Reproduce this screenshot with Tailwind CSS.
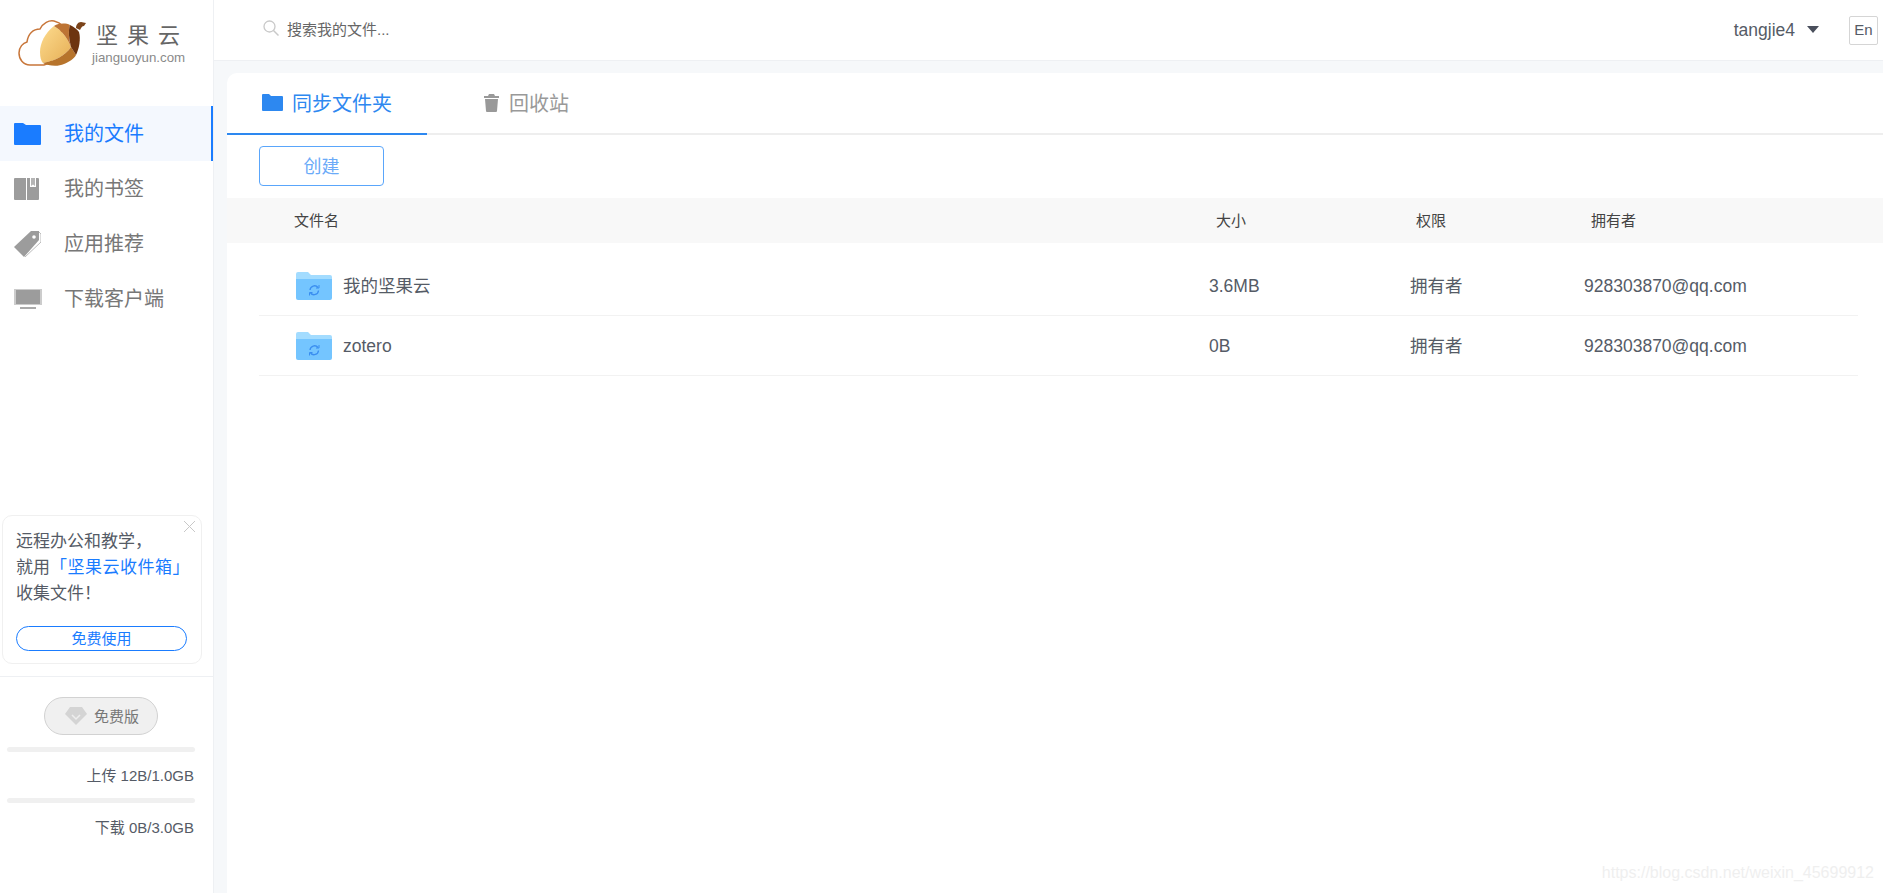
<!DOCTYPE html>
<html lang="zh-CN">
  <head>
    <meta charset="UTF-8">
    <title>坚果云</title>
    <script src="https://cdn.jsdelivr.net/npm/@tailwindcss/browser@4"></script>
  </head>
  <body class="font-['Liberation_Sans','Noto_Sans_CJK_SC',sans-serif] bg-white">
    <div class="relative flex h-[893px] w-[1883px] overflow-hidden">
      <!-- sidebar -->
      <aside class="flex h-full w-[214px] shrink-0 flex-col border-r border-[#eef0f3] bg-white">
        <div class="flex h-[106px] shrink-0 items-start pl-[18px] pt-[19px]">
          <svg class="shrink-0" width="70" height="48" viewBox="0 0 70 48">
            <defs>
              <linearGradient id="nut" x1="0" y1="0" x2="1" y2="1">
                <stop offset="0" stop-color="#fddc8f"/>
                <stop offset="1" stop-color="#e6ae55"/>
              </linearGradient>
            </defs>
            <path d="M26 46H12C5 46 1 40 1 34c0-6 4-10 8-11 1-8 6-13 13-13 3-6 9-9 14-8 4 1 7 3 9 5L32 44z" fill="#fff" stroke="#c8763a" stroke-width="1.500"/>
            <path d="M36 7C27 14 22 24 22 33c0 5 1 9 3 11C36 42 47 37 53 28 49 18 43 11 36 7z" fill="url(#nut)"/>
            <path d="M25 44c5 3 15 4 21 1 5-2 10-5 12-9l-5-8C47 37 36 42 25 44z" fill="#b7742c"/>
            <path d="M36 7c5-3 12-3 16-1-2 6-1 14 1 22C49 18 43 11 36 7z" fill="#bd7434"/>
            <path d="M52 6c4 2 7 4 9 7 2 7 0 17-3 23l-5-8c-2-8-3-16-1-22z" fill="#6d3410"/>
            <path d="M58 9c0-3 2-6 5-6l5 1-2 3c-2 0-3 2-4 4z" fill="#7b431a"/>
          </svg>
          <div class="ml-[4px] flex flex-col">
            <span class="pt-[5px] pl-[4px] text-[22px] leading-[24px] tracking-[9px] text-[#666] whitespace-nowrap">坚果云</span>
            <span class="mt-[2px] text-[13.300px] leading-[15px] text-[#8a8a8a]">jianguoyun.com</span>
          </div>
        </div>

        <nav class="flex flex-col">
          <a class="flex h-[55px] items-center border-r-2 border-[#1a7cff] bg-[#f4f8fe] pl-[14px] text-[20px] text-[#1a7cff]">
            <svg width="27" height="24" viewBox="0 0 27 24"><path d="M0 2a1 1 0 0 1 1-1h8l3 2h14a1 1 0 0 1 1 1v18a1 1 0 0 1-1 1H1a1 1 0 0 1-1-1z" fill="#1a7cff"/></svg>
            <span class="ml-[23px]">我的文件</span>
          </a>
          <a class="flex h-[55px] items-center pl-[14px] text-[20px] text-[#777]">
            <svg width="26" height="24" viewBox="0 0 26 24"><path d="M1 1h11v22H1a1 1 0 0 1-1-1V2a1 1 0 0 1 1-1zM13 1h3v9h6V1h2a1 1 0 0 1 1 1v20a1 1 0 0 1-1 1H13z" fill="#9c9c9c"/><path d="M17 1h4v8l-2-1.500L17 9z" fill="#b5b5b5"/></svg>
            <span class="ml-[24px]">我的书签</span>
          </a>
          <a class="flex h-[55px] items-center pl-[14px] text-[20px] text-[#777]">
            <svg width="27" height="27" viewBox="0 0 27 27"><path d="M17 1h8v9L10 27 0 17z" fill="#9c9c9c"/><path d="M25 2l2 2v8L11 27" fill="none" stroke="#bbb"/><circle cx="20" cy="7" r="1.800" fill="#fff"/></svg>
            <span class="ml-[23px]">应用推荐</span>
          </a>
          <a class="flex h-[55px] items-center pl-[14px] text-[20px] text-[#777]">
            <svg width="28" height="20" viewBox="0 0 28 20"><path d="M0 0h28v16H0z" fill="#ccc"/><path d="M2 1h24v14H2z" fill="#9c9c9c"/><path d="M6 18h16v2H6z" fill="#aaa"/></svg>
            <span class="ml-[22px]">下载客户端</span>
          </a>
        </nav>

        <div class="mt-auto">
          <div class="relative mx-[2px] h-[149px] w-[200px] rounded-[10px] border border-[#f0f0f0] px-[13px] pt-[13px] text-[17px] leading-[26px] text-[#555b66]">
            <svg class="absolute right-[5px] top-[4px]" width="13" height="13" viewBox="0 0 13 13"><path d="M1 1l11 11M12 1L1 12" stroke="#c8c8c8" stroke-width="1"/></svg>
            <p>远程办公和教学，</p>
            <p class="whitespace-nowrap">就用<span class="tracking-[0.500px] text-[#1a7cff]">「坚果云收件箱」</span></p>
            <p>收集文件！</p>
            <button class="mt-[19px] flex h-[25px] w-[171px] items-center justify-center rounded-full border border-[#1a7cff] text-[15px] text-[#1a7cff]">免费使用</button>
          </div>
          <div class="mt-[12px] h-[217px] border-t border-[#eef0f3]">
            <div class="ml-[44px] mt-[20px] flex h-[38px] w-[114px] items-center rounded-full border border-[#d2d2d2] bg-[#f0f0f0] pl-[20px] pt-[2px] text-[15px] text-[#777]">
              <svg class="-mt-[2px]" width="22" height="22" viewBox="0 0 22 22"><path d="M5 2h12l5 7-11 11L0 9z" fill="#d4d4d4"/><path d="M7 10l4 4 4-4" fill="none" stroke="#eee" stroke-width="1.500"/></svg>
              <span class="ml-[7px]">免费版</span>
            </div>
            <div class="ml-[7px] mr-[18px] mt-[12px] h-[5px] rounded-full bg-[#f0f0f0]"></div>
            <p class="mr-[19px] mt-[14px] text-right text-[15px] leading-[20px] text-[#555b66]">上传 12B/1.0GB</p>
            <div class="ml-[7px] mr-[18px] mt-[12px] h-[5px] rounded-full bg-[#f0f0f0]"></div>
            <p class="mr-[19px] mt-[15px] text-right text-[15px] leading-[20px] text-[#555b66]">下载 0B/3.0GB</p>
          </div>
        </div>
      </aside>

      <!-- main column -->
      <div class="flex min-w-0 flex-1 flex-col bg-[#f6f8fa]">
        <header class="flex h-[61px] shrink-0 items-center border-b border-[#eef0f3] bg-white">
          <svg class="ml-[49px] mb-[4px]" width="16" height="16" viewBox="0 0 16 16"><circle cx="6.500" cy="6.500" r="5.500" fill="none" stroke="#c9c9c9" stroke-width="1.300"/><path d="M10.500 10.500l5 5" stroke="#c9c9c9" stroke-width="1.500"/></svg>
          <span class="ml-[8px] pt-[1px] text-[15px] text-[#666]">搜索我的文件...</span>
          <span class="ml-auto text-[17.500px] text-[#555b66]">tangjie4</span>
          <span class="ml-[12px] mb-[2px] h-0 w-0 border-x-[6px] border-t-[7px] border-x-transparent border-t-[#4a4f5c]"></span>
          <span class="ml-[30px] mr-[5px] flex h-[29px] w-[29px] items-center justify-center rounded-[2px] border border-[#d5d5d5] text-[15px] text-[#555b66]">En</span>
        </header>

        <main class="ml-[13px] mt-[12px] flex-1 rounded-tl-[10px] bg-white">
          <div class="flex h-[62px] border-b-2 border-[#eeeeee]">
            <a class="-mb-[2px] flex h-[62px] w-[200px] items-center border-b-2 border-[#2d88f0] pl-[35px] pt-[1px] text-[20px] text-[#2d88f0]">
              <svg class="-mt-[2px]" width="21" height="17" viewBox="0 0 21 17"><path d="M0 1a1 1 0 0 1 1-1h6l2 2h11a1 1 0 0 1 1 1v13a1 1 0 0 1-1 1H1a1 1 0 0 1-1-1z" fill="#2d88f0"/></svg>
              <span class="ml-[9px]">同步文件夹</span>
            </a>
            <a class="flex items-center pl-[57px] pt-[1px] text-[20px] text-[#999]">
              <svg class="-mt-[2px]" width="15" height="18" viewBox="0 0 15 18"><path d="M5 0h5l1 2h4v2H0V2h4zM1 5h13l-1 12a1 1 0 0 1-1 1H3a1 1 0 0 1-1-1z" fill="#999"/></svg>
              <span class="ml-[10px]">回收站</span>
            </a>
          </div>
          <div class="px-[32px] pt-[11px]">
            <button class="h-[40px] w-[125px] rounded-[4px] border border-[#5aa6fb] pt-[2px] text-[18px] text-[#6aaaf8]">创建</button>
          </div>
          <!-- table -->
          <div class="mt-[12px] grid h-[45px] grid-cols-[977px_200px_175px_1fr] items-center bg-[#f8f8f8] pt-[1px] text-[15px] text-[#444]">
            <span class="pl-[67px]">文件名</span>
            <span class="pl-[12px]">大小</span>
            <span class="pl-[12px]">权限</span>
            <span class="pl-[12px]">拥有者</span>
          </div>
          <div class="ml-[32px] mr-[25px] mt-[13px]">
            <div class="grid h-[60px] grid-cols-[950px_201px_174px_1fr] items-center border-b border-[#f2f2f2] pt-[1px] text-[17.500px] text-[#555b66]">
              <div class="flex items-center pl-[37px]">
                <svg width="36" height="28" viewBox="0 0 36 28"><path d="M0 2a2 2 0 0 1 2-2h10l3 3h19a2 2 0 0 1 2 2v5H0z" fill="#a3dcff"/><path d="M0 7h36v19a2 2 0 0 1-2 2H2a2 2 0 0 1-2-2z" fill="#74c5ff"/><path d="M14 18a4.500 4.500 0 0 1 8-2.500M22.500 18.500a4.500 4.500 0 0 1-8 2.500" fill="none" stroke="#3a8ef0" stroke-width="1.300"/><path d="M23 13v3h-3M13.500 23.500v-3h3" fill="none" stroke="#3a8ef0" stroke-width="1"/></svg>
                <span class="ml-[11px]">我的坚果云</span>
              </div>
              <span>3.6MB</span>
              <span>拥有者</span>
              <span>928303870@qq.com</span>
            </div>
            <div class="grid h-[60px] grid-cols-[950px_201px_174px_1fr] items-center border-b border-[#f2f2f2] pt-[1px] text-[17.500px] text-[#555b66]">
              <div class="flex items-center pl-[37px]">
                <svg width="36" height="28" viewBox="0 0 36 28"><path d="M0 2a2 2 0 0 1 2-2h10l3 3h19a2 2 0 0 1 2 2v5H0z" fill="#a3dcff"/><path d="M0 7h36v19a2 2 0 0 1-2 2H2a2 2 0 0 1-2-2z" fill="#74c5ff"/><path d="M14 18a4.500 4.500 0 0 1 8-2.500M22.500 18.500a4.500 4.500 0 0 1-8 2.500" fill="none" stroke="#3a8ef0" stroke-width="1.300"/><path d="M23 13v3h-3M13.500 23.500v-3h3" fill="none" stroke="#3a8ef0" stroke-width="1"/></svg>
                <span class="ml-[11px]">zotero</span>
              </div>
              <span>0B</span>
              <span>拥有者</span>
              <span>928303870@qq.com</span>
            </div>
          </div>
        </main>
      </div>

      <!-- watermark over the page -->
      <span class="absolute bottom-[8px] right-[9px] text-[16px] text-[#efefef]">https://blog.csdn.net/weixin_45699912</span>
    </div>
  </body>
</html>
